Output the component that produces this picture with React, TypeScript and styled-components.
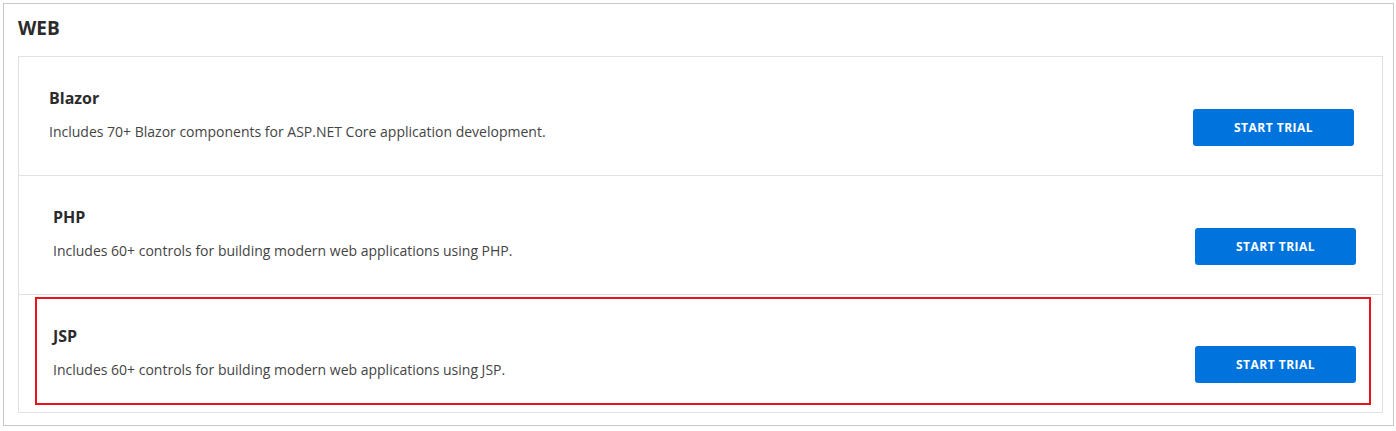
import styled, { createGlobalStyle } from "styled-components";

const GlobalStyle = createGlobalStyle`
  body {
    margin: 0;
    background: #fff;
    font-family: "Open Sans", "Liberation Sans", sans-serif;
    color: #333;
  }
  * {
    box-sizing: border-box;
  }
`;

const Page = styled.div`
  padding: 3px 2px 5px 3px;
`;

const Panel = styled.section`
  border: 1px solid #c8c8c8;
  padding: 0 10px 11px 14px;
  height: 423px;
`;

const Heading = styled.h2`
  margin: 0;
  height: 52px;
  padding-top: 11px;
  font-size: 19px;
  line-height: 26px;
  font-weight: 700;
  color: #2b2b2b;
`;

const List = styled.div`
  border: 1px solid #e2e2e2;
`;

const Row = styled.div<{ $left: number; $right: number; $last?: boolean }>`
  position: relative;
  display: flex;
  align-items: flex-end;
  justify-content: space-between;
  height: ${({ $last }) => ($last ? "117px" : "119px")};
  padding: 30px ${({ $right }) => $right}px 0 ${({ $left }) => $left}px;
  border-bottom: ${({ $last }) => ($last ? "none" : "1px solid #e2e2e2")};
`;

const Info = styled.div`
  align-self: flex-start;
`;

const Title = styled.h3`
  margin: 0 0 13px;
  font-size: 16px;
  line-height: 22px;
  font-weight: 700;
  color: #2b2b2b;
`;

const Description = styled.p`
  margin: 0;
  font-size: 14px;
  line-height: 20px;
  color: #444;
`;

const Button = styled.button`
  width: 161px;
  height: 37px;
  margin-bottom: 29px;
  border: none;
  border-radius: 3px;
  background-color: #0074dc;
  font-family: "Open Sans", "Liberation Sans", sans-serif;
  font-size: 12px;
  font-weight: 700;
  letter-spacing: 0.5px;
  color: #fff;
  cursor: pointer;
`;

const Highlight = styled.div`
  position: absolute;
  left: 16px;
  top: 2px;
  width: 1336px;
  height: 108px;
  border: 2px solid #e8141c;
  pointer-events: none;
`;

const products = [
  {
    name: "Blazor",
    text: "Includes 70+ Blazor components for ASP.NET Core application development.",
    left: 30,
    right: 28,
  },
  {
    name: "PHP",
    text: "Includes 60+ controls for building modern web applications using PHP.",
    left: 34,
    right: 26,
  },
  {
    name: "JSP",
    text: "Includes 60+ controls for building modern web applications using JSP.",
    left: 34,
    right: 26,
    highlight: true,
  },
];

const App = () => {
  return (
    <>
      <GlobalStyle />
      <Page>
        <Panel>
          <Heading>WEB</Heading>
          <List>
            {products.map((p, i) => (
              <Row
                key={p.name}
                $left={p.left}
                $right={p.right}
                $last={i === products.length - 1}
              >
                <Info>
                  <Title>{p.name}</Title>
                  <Description>{p.text}</Description>
                </Info>
                <Button type="button">START TRIAL</Button>
                {p.highlight && <Highlight />}
              </Row>
            ))}
          </List>
        </Panel>
      </Page>
    </>
  );
};

export default App;
